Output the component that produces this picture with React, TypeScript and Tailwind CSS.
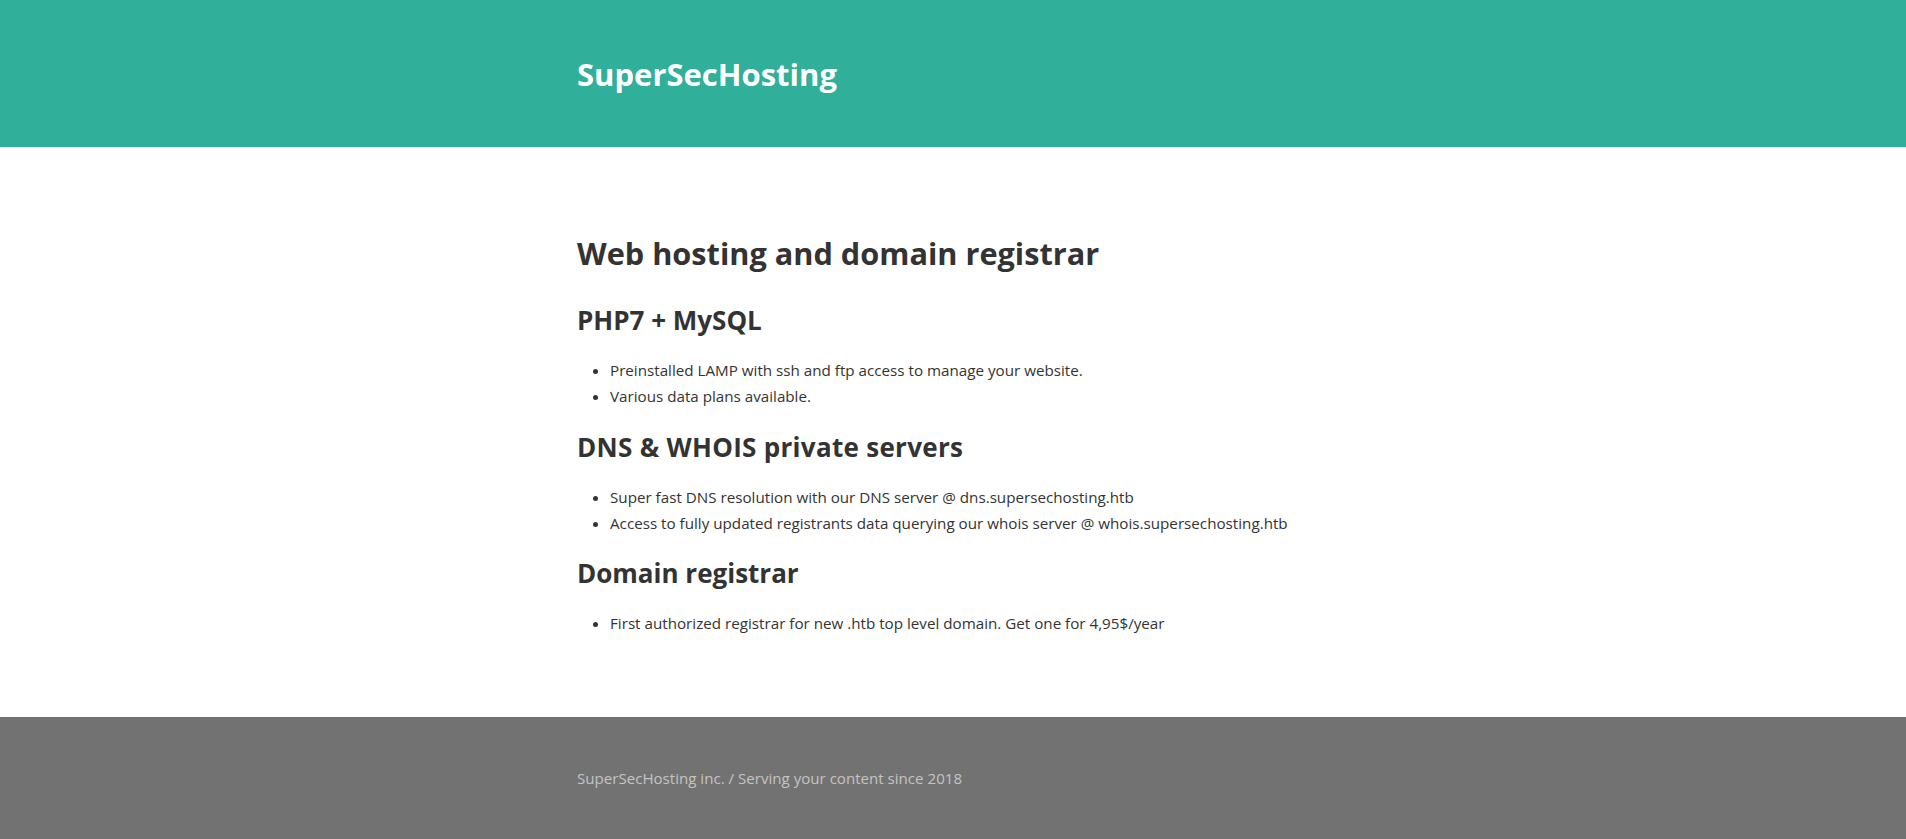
export default function App() {
  const font = { fontFamily: '"Open Sans", "Noto Sans", sans-serif' };
  const ul = "list-disc pl-[33px] text-[15.2px] leading-[25.5px]";
  return (
    <div className="min-h-[839px] flex flex-col bg-white text-[#333]" style={font}>
      <header className="h-[147px] shrink-0 bg-[#30af9b] flex items-center">
        <div className="w-[752px] mx-auto">
          <h1 className="text-[31px] font-bold text-white leading-[1.2] pt-[3px]">SuperSecHosting</h1>
        </div>
      </header>
      <main className="flex-1 pt-[88px] pb-[40px]">
        <div className="w-[752px] mx-auto">
          <h1 className="text-[30.7px] font-bold leading-[1.2] mb-[33px]">Web hosting and domain registrar</h1>
          <h2 className="text-[26px] font-bold leading-[1.2] mb-[22px]">PHP7 + MySQL</h2>
          <ul className={`${ul} mb-[23px]`}>
            <li>Preinstalled LAMP with ssh and ftp access to manage your website.</li>
            <li>Various data plans available.</li>
          </ul>
          <h2 className="text-[26px] font-bold leading-[1.2] mb-[22px] tracking-[0.3px]">DNS &amp; WHOIS private servers</h2>
          <ul className={`${ul} mb-[22px]`}>
            <li>Super fast DNS resolution with our DNS server @ dns.supersechosting.htb</li>
            <li>Access to fully updated registrants data querying our whois server @ whois.supersechosting.htb</li>
          </ul>
          <h2 className="text-[26px] font-bold leading-[1.2] mb-[22px]">Domain registrar</h2>
          <ul className={ul}>
            <li>First authorized registrar for new .htb top level domain. Get one for 4,95$/year</li>
          </ul>
        </div>
      </main>
      <footer className="h-[122px] shrink-0 bg-[#727272] flex items-center">
        <div className="w-[752px] mx-auto text-[15.1px] text-[#c4c4c4]">
          SuperSecHosting inc. / Serving your content since 2018
        </div>
      </footer>
    </div>
  );
}
